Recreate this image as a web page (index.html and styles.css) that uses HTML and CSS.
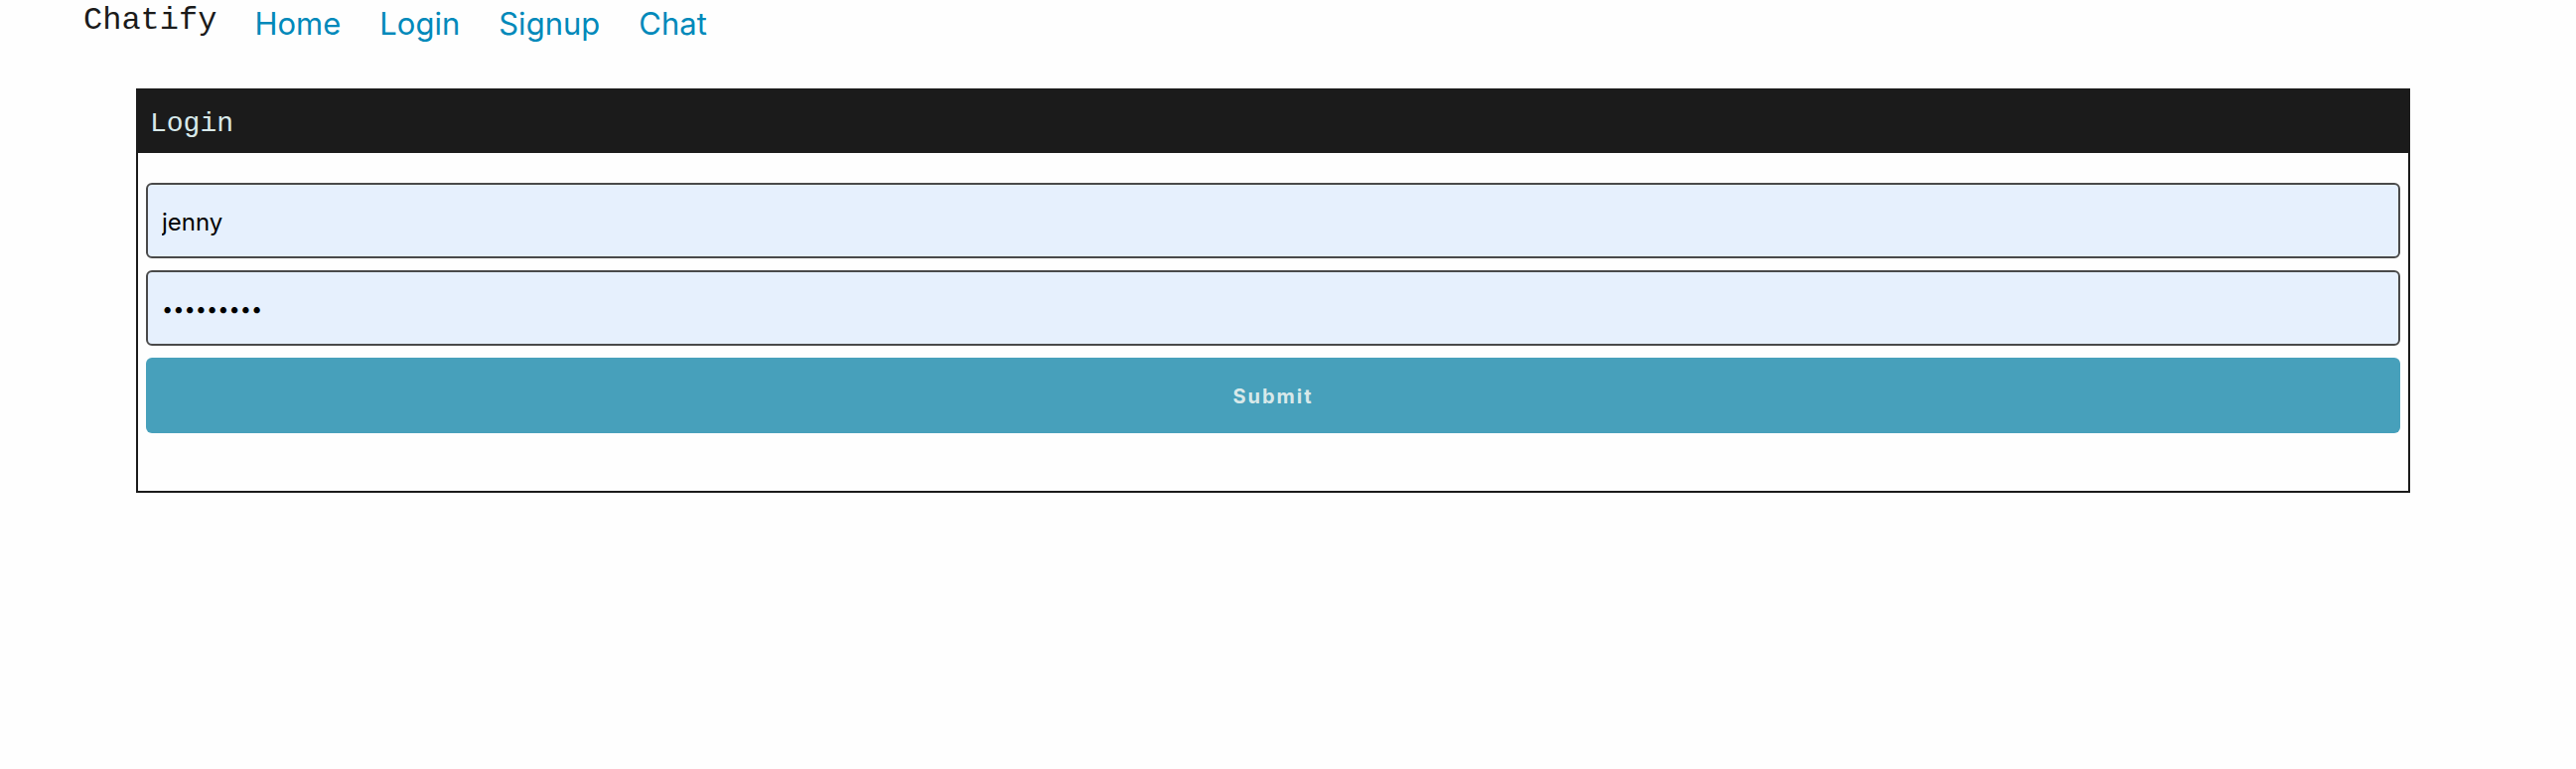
FILE: index.html
```html
<!DOCTYPE html>
<html lang="en">
<head>
<meta charset="utf-8">
<title>Chatify</title>
<link rel="stylesheet" href="styles.css">
</head>
<body>
<header class="navbar">
  <span class="brand">Chatify</span>
  <nav class="nav-links">
    <a href="#home">Home</a>
    <a href="#login">Login</a>
    <a href="#signup">Signup</a>
    <a href="#chat">Chat</a>
  </nav>
</header>
<main class="panel">
  <h1 class="panel-title">Login</h1>
  <form class="login-form">
    <input class="field" type="text" name="username" aria-label="Username" value="jenny">
    <input class="field password" type="password" name="password" aria-label="Password" value="secret123">
    <button class="submit" type="submit">Submit</button>
  </form>
</main>
</body>
</html>
```
FILE: styles.css
```css
* {
  box-sizing: border-box;
}

body {
  margin: 0;
  background: #fefefe;
  color: #1b1b1b;
  font-family: Inter, "Liberation Sans", sans-serif;
}

.navbar {
  display: flex;
  gap: 38px;
  padding: 0 84px;
}

.brand {
  font-family: "Courier New", "Liberation Mono", monospace;
  font-size: 32px;
  line-height: 42px;
}

.nav-links {
  display: flex;
  gap: 39px;
  font-size: 31px;
  line-height: 48px;
}

.nav-links a {
  color: #0089ba;
  text-decoration: none;
}

.panel {
  margin: 41px 167px 0 137px;
  border: 2px solid #1b1b1b;
}

.panel-title {
  margin: 0;
  padding: 16px 12px 12px;
  background: #1b1b1b;
  color: #d8e9ea;
  font-family: "Courier New", "Liberation Mono", monospace;
  font-size: 28px;
  font-weight: 400;
  line-height: 35px;
}

.login-form {
  display: flex;
  flex-direction: column;
  gap: 12px;
  padding: 30px 8px 58px;
}

.field,
.submit {
  width: 100%;
  height: 76px;
  border-radius: 6px;
  font-family: inherit;
}

.field {
  padding: 2px 14px 0;
  border: 2px solid #4a4a4a;
  background: #e6f0fd;
  color: #000;
  font-size: 24px;
}

.password {
  font-size: 20px;
}

.submit {
  padding: 2px 0 0;
  border: 0;
  background: #47a0bb;
  color: #d8e9ea;
  font-size: 20px;
  font-weight: 700;
  letter-spacing: 2px;
}
```
